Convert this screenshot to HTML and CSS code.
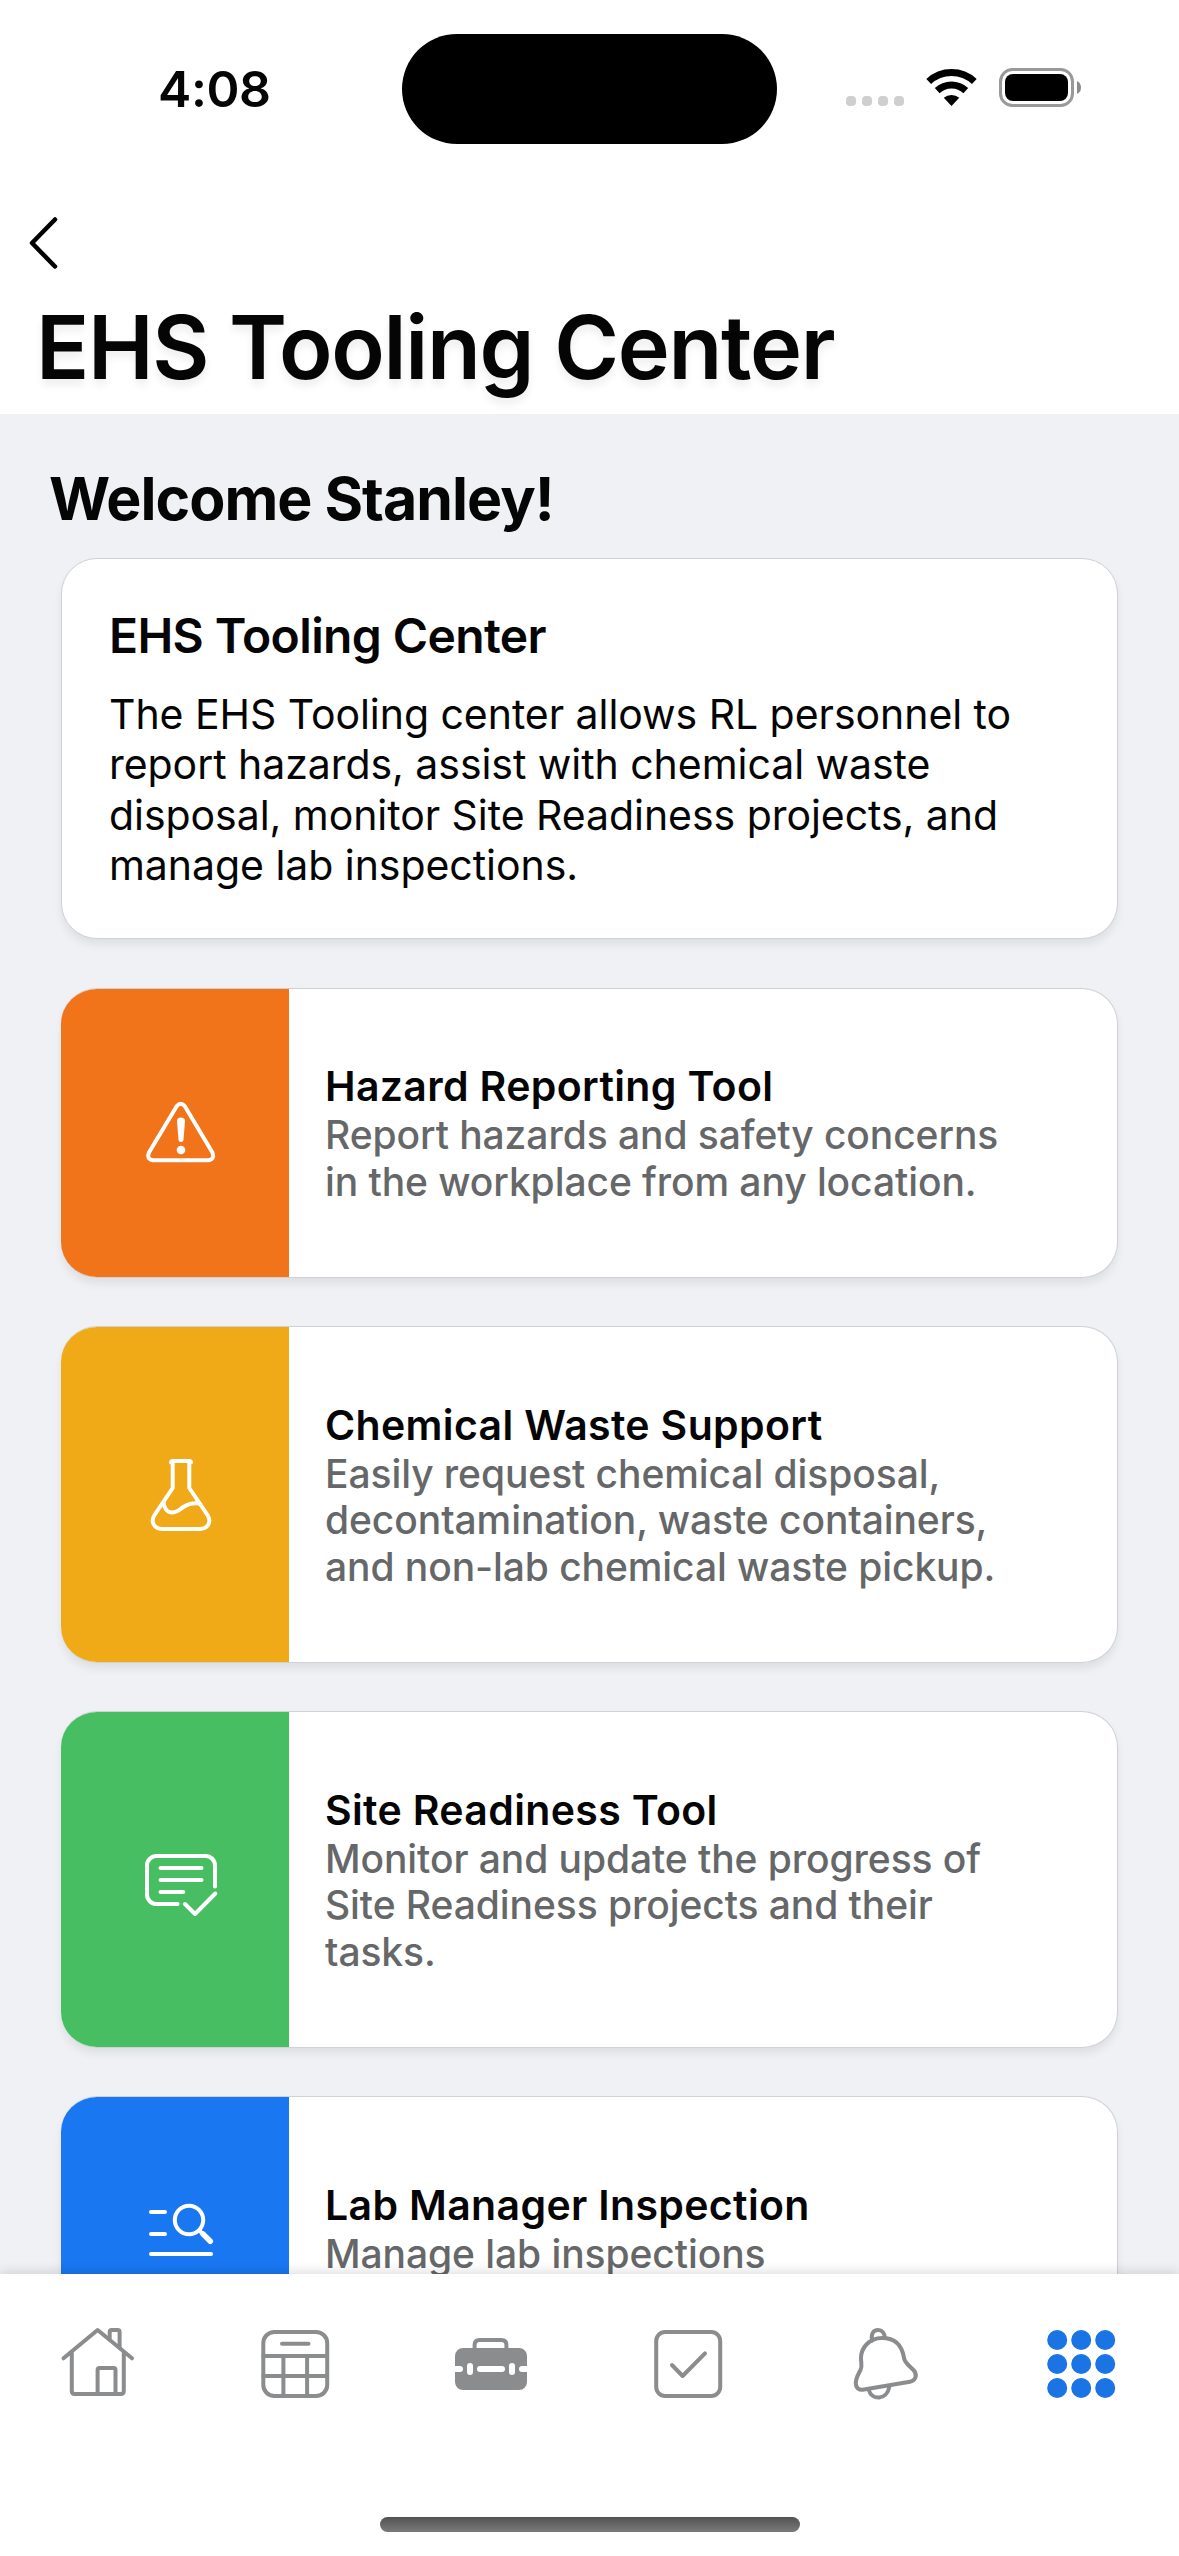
FILE: index.html
```html
<!DOCTYPE html>
<html lang="en">
<head>
<meta charset="utf-8">
<title>EHS Tooling Center</title>
<link rel="stylesheet" href="styles.css">
</head>
<body>
<div class="screen">
  <header class="header">
    <div class="status">
      <span class="status-time">4:08</span>
      <span class="island"></span>
      <svg class="status-icons" viewBox="0 0 236 56" width="236" height="56">
        <g fill="#cfcfcf">
          <rect x="0" y="36" width="10" height="10" rx="4"/><rect x="16" y="36" width="10" height="10" rx="4"/><rect x="32" y="36" width="10" height="10" rx="4"/><rect x="48" y="36" width="10" height="10" rx="4"/>
        </g>
        <g fill="none" stroke="#000" stroke-width="7">
          <path d="M82.7 21.5A33.5 33.5 0 0 1 128.3 21.5"/>
          <path d="M91.2 30.6A21 21 0 0 1 119.8 30.6"/>
        </g>
        <path d="M105.5 46L97.8 37.8A12 12 0 0 1 113.2 37.8Z"/>
        <rect x="154.5" y="9.5" width="72" height="36" rx="12" fill="none" stroke="#999" stroke-width="3"/>
        <rect x="159" y="14" width="63" height="27" rx="8"/>
        <path d="M231 21Q235 23 235 27.500T231 34Z" fill="#8a8a8a"/>
      </svg>
    </div>
    <div class="back-row">
      <svg viewBox="0 0 30 54" width="30" height="54"><path d="M27 3.500L4 27L27 50.500" fill="none" stroke="#000" stroke-width="4.500" stroke-linecap="round" stroke-linejoin="round"/></svg>
    </div>
    <h1 class="page-title">EHS Tooling Center</h1>
  </header>

  <main class="content">
    <h2 class="welcome">Welcome Stanley!</h2>

    <section class="card intro">
      <h3 class="intro-title">EHS Tooling Center</h3>
      <p class="intro-text">The EHS Tooling center allows RL personnel to<br>report hazards, assist with chemical waste<br>disposal, monitor Site Readiness projects, and<br>manage lab inspections.</p>
    </section>

    <article class="card tool">
      <div class="tool-icon orange">
        <svg class="icon" viewBox="0 0 72 72">
          <path d="M31.800 9Q35.700 4.500 39.700 9L67.400 55.500Q70 62.500 63.500 63.300H8Q1.300 62.500 4 55.500Z"/>
          <path class="solid" d="M32 24Q32 20.500 36 20.500T40 24L38.500 43Q38.300 45 36 45T33.500 43Z"/>
          <circle class="solid" cx="36" cy="53" r="4.300"/>
        </svg>
      </div>
      <div class="tool-body">
        <h3 class="tool-title">Hazard Reporting Tool</h3>
        <p class="tool-text">Report hazards and safety concerns<br>in the workplace from any location.</p>
      </div>
    </article>

    <article class="card tool">
      <div class="tool-icon yellow">
        <svg class="icon" viewBox="0 0 72 72">
          <path d="M26 4.500Q26 3 28 3H44Q46 3 46 4.500M27.700 3V30L9.500 57C5 64 9.500 71 17 71H55C62.500 71 67 64 62.500 57L44.300 30V3"/>
          <path d="M18.800 45C19 50 22 54.500 27 54.500C32 54.500 34.500 51.500 38.300 49C43 46 48 44.500 54.500 45.500"/>
        </svg>
      </div>
      <div class="tool-body">
        <h3 class="tool-title">Chemical Waste Support</h3>
        <p class="tool-text">Easily request chemical disposal,<br>decontamination, waste containers,<br>and non-lab chemical waste pickup.</p>
      </div>
    </article>

    <article class="card tool">
      <div class="tool-icon green">
        <svg class="icon" viewBox="0 0 72 72">
          <path d="M32.700 61H11.500A9.500 9.500 0 0 1 2 51.500V22.500A9.500 9.500 0 0 1 11.500 13H60.500A9.500 9.500 0 0 1 70 22.500V43.500"/>
          <path d="M15.500 25H56.500M15.500 37H56.500M15.500 49H38.300M40 61L50 71L70.300 50.500"/>
        </svg>
      </div>
      <div class="tool-body">
        <h3 class="tool-title">Site Readiness Tool</h3>
        <p class="tool-text">Monitor and update the progress of<br>Site Readiness projects and their<br>tasks.</p>
      </div>
    </article>

    <article class="card tool">
      <div class="tool-icon blue">
        <svg class="icon" viewBox="0 0 72 72">
          <path d="M6 19H20M6 41H20M6 61H66"/>
          <circle cx="44" cy="27" r="14.200"/>
          <path d="M54.300 37.500L58 41"/>
          <path class="handle" d="M58 41L65.300 48.300"/>
        </svg>
      </div>
      <div class="tool-body">
        <h3 class="tool-title">Lab Manager Inspection</h3>
        <p class="tool-text">Manage lab inspections</p>
      </div>
    </article>
  </main>

  <nav class="tabbar">
    <div class="tabs">
      <a class="tab"><svg class="icon" viewBox="0 0 72 72">
        <path d="M1.500 30.300L35.600 2L70 30.300M9.800 24V63Q9.800 66 12.800 66H58.800Q61.800 66 61.800 63V24"/>
        <path d="M35.600 65V42Q35.600 40 37.600 40H51.500Q53.500 40 53.500 42V65M47.700 11.500V4Q47.700 2 49.700 2H55.600Q57.600 2 57.600 4V20"/>
      </svg></a>
      <a class="tab"><svg class="icon" viewBox="0 0 72 72">
        <rect x="4.300" y="4" width="63.900" height="64" rx="11"/>
        <path d="M4.300 28H68.200M4.300 48H68.200M24.400 28V68M48.100 28V68M23 15.700H49.500"/>
      </svg></a>
      <a class="tab"><svg class="icon" viewBox="0 0 72 72">
        <path d="M19.600 22V17Q19.600 12 24.600 12H46.400Q51.400 12 51.400 17V22"/>
        <path class="solid" fill-rule="evenodd" d="M8 20H64A8 8 0 0 1 72 28V38H67A3 3 0 0 0 67 44H72V54A8 8 0 0 1 64 62H8A8 8 0 0 1 0 54V44H5A3 3 0 0 0 5 38H0V28A8 8 0 0 1 8 20ZM12 38V44A3 3 0 0 0 18 44V38A3 3 0 0 0 12 38ZM25 38A3 3 0 0 0 25 44H47A3 3 0 0 0 47 38ZM54 38V44A3 3 0 0 0 60 44V38A3 3 0 0 0 54 38Z"/>
      </svg></a>
      <a class="tab"><svg class="icon" viewBox="0 0 72 72">
        <rect x="4.200" y="4" width="64" height="64" rx="9"/>
        <path d="M20 37L30.600 48L53 25.300"/>
      </svg></a>
      <a class="tab"><svg class="icon" viewBox="0 0 72 72">
        <path d="M34 10C21 10 13 20 13 30C13 36 14.500 38 12.500 42C10 47 7.800 50 7.800 55.300C7.800 60 11 62.500 16 61.500L62 53.700C68.500 52.500 69.500 45.500 65 41.500C60 36.500 57 35 56 30C54.500 20 49 10 34 10Z"/>
        <path d="M24.200 12.500C22.500 6 25.500 2 30 2C34 2 36.500 5 36.800 9.500M20.800 62C23.500 72.500 39 72.500 41.300 59"/>
      </svg></a>
      <a class="tab active"><svg class="icon" viewBox="0 0 72 72">
        <g class="solid"><circle cx="12.200" cy="12" r="10"/><circle cx="36.200" cy="12" r="10"/><circle cx="60.200" cy="12" r="10"/><circle cx="12.200" cy="36" r="10"/><circle cx="36.200" cy="36" r="10"/><circle cx="60.200" cy="36" r="10"/><circle cx="12.200" cy="60" r="10"/><circle cx="36.200" cy="60" r="10"/><circle cx="60.200" cy="60" r="10"/></g>
      </svg></a>
    </div>
    <span class="home-indicator"></span>
  </nav>
</div>
</body>
</html>
```
FILE: styles.css
```css
* { box-sizing: border-box; margin: 0; padding: 0; }

body { background: #f0f1f5; color: #050505; font-family: Inter, sans-serif; }

.screen { display: flex; flex-direction: column; width: 1179px; height: 2556px; overflow: hidden; }

.header { flex: none; height: 414px; background: #fff; }

.status { display: grid; grid-template-columns: 402px 375px 1fr; align-items: center; height: 177px; }
.status-time { padding-left: 158px; font-size: 50px; font-weight: 600; line-height: 50px; letter-spacing: -0.4px; }
.island { height: 110px; border-radius: 55px; background: #000; }
.status-icons { margin: -1px 0 0 69px; }

.back-row { display: flex; height: 120px; padding: 39px 0 0 28px; }

.page-title {
  padding-left: 36px;
  font-size: 88px; font-weight: 600; line-height: 100px; letter-spacing: -1.3px;
  text-shadow: 0 6px 9px rgba(0, 0, 0, 0.07);
}

.content { flex: 1; min-height: 0; overflow: hidden; padding: 50px 61px 0; display: flex; flex-direction: column; gap: 48.5px; }

.welcome { margin: 0 0 -24.5px -12px; font-size: 59px; font-weight: 700; line-height: 70px; letter-spacing: -0.98px; }

.card {
  flex: none;
  overflow: hidden;
  border: 1px solid #cfd1d6;
  border-radius: 36px;
  background: #fff;
  box-shadow: 0 6px 9px rgba(0, 0, 0, 0.07);
}

.intro { height: 381px; padding: 48px 47px 0; }
.intro-title { font-size: 48px; font-weight: 600; line-height: 58px; letter-spacing: -0.62px; }
.intro-text { margin-top: 24px; font-size: 41px; line-height: 50.3px; letter-spacing: -0.05px; white-space: nowrap; }

.tool { display: flex; min-height: 265px; border-left-width: 0; }
.tool-icon { display: flex; flex: none; align-items: center; justify-content: center; width: 228px; padding-left: 12px; }
.tool-body { display: flex; flex-direction: column; justify-content: center; padding: 71.5px 0 71.5px 36px; white-space: nowrap; }
.tool-title { font-size: 41px; font-weight: 600; line-height: 52px; letter-spacing: 0.35px; }
.tool-text { color: #656769; font-size: 39px; font-weight: 500; line-height: 46.5px; letter-spacing: -0.08px; }

.orange { background: #f1731a; }
.yellow { background: #f0aa17; }
.green { background: #48be62; }
.blue { background: #1977f2; }

.icon { width: 72px; height: 72px; overflow: visible; fill: none; stroke: currentColor; stroke-width: 4px; stroke-linecap: round; stroke-linejoin: round; }
.icon .solid { fill: currentColor; stroke: none; }
.icon .handle { stroke-width: 5.5px; }
.tool-icon { color: #fff; }

.tabbar {
  position: relative;
  flex: none;
  display: flex; flex-direction: column; align-items: center; justify-content: space-between;
  height: 282px;
  padding: 54px 0 24px;
  background: #fff;
  box-shadow: 0 -1px 12px rgba(0, 0, 0, 0.16);
}
.tabs { display: grid; grid-template-columns: repeat(6, 1fr); width: 100%; }
.tab { display: flex; justify-content: center; color: #8a8c8e; }
.tab.active { color: #1b74e4; }
.home-indicator { width: 420px; height: 15px; border-radius: 8px; background: linear-gradient(#525252, #7a7a7a); }
```
